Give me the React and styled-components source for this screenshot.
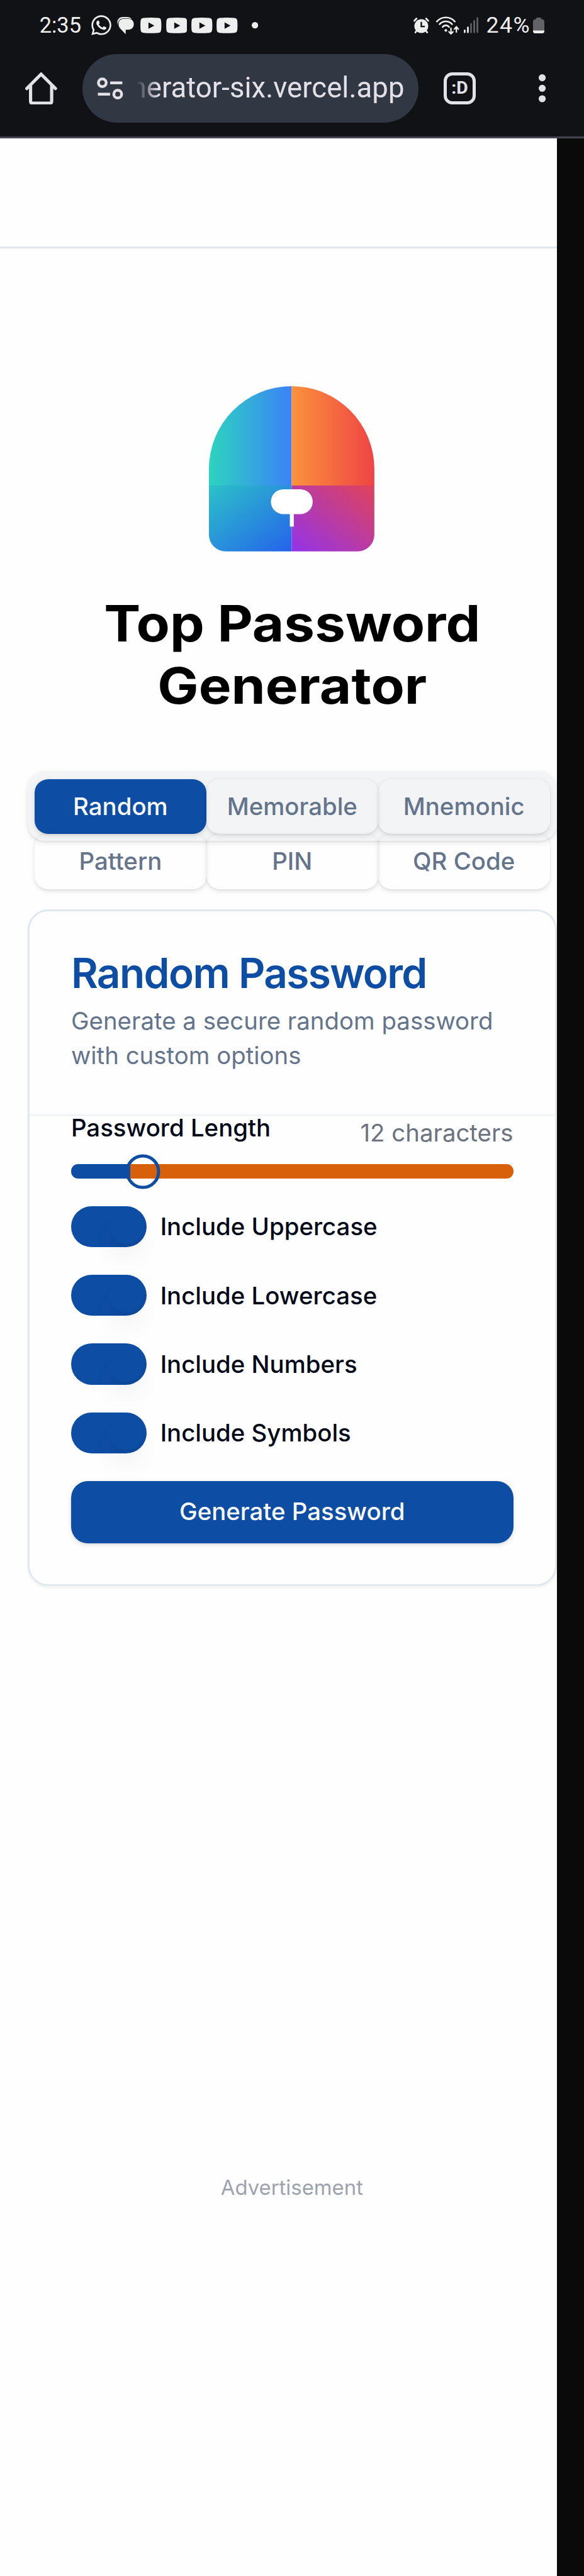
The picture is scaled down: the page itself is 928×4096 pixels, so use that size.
import React from "react";
import styled, { createGlobalStyle } from "styled-components";
import { FaWhatsapp } from "react-icons/fa";

/* 1rem is ten design pixels. */
const GlobalStyle = createGlobalStyle`
  html { font-size: 8.59px; }
  *, *::before, *::after { box-sizing: border-box; }
  body { margin: 0; background: #0a0a0a; }
  #root { height: 4096px; overflow: hidden; }
  h1, h2, p { margin: 0; }
  button { font: inherit; border: 0; padding: 0; background: none; }
`;

const Screen = styled.div`
  display: flex;
  flex-direction: column;
  width: 100%;
  height: 100%;
  font-family: Inter, "Liberation Sans", sans-serif;
  font-size: 4.47rem;
`;

const BrowserChrome = styled.header`
  flex: none;
  height: 25.6rem;
  background: #111216;
  border-bottom: 3px solid #45454f;
  color: #e3e1e8;
`;

const StatusBar = styled.div`
  display: flex;
  justify-content: space-between;
  align-items: center;
  height: 10rem;
  padding: 0 7.3rem 0.6rem 7.3rem;
  color: #eee;
  font-family: Roboto, sans-serif;
  font-size: 4rem;
`;

const StatusGroup = styled.div`
  display: flex;
  align-items: center;
`;

const Clock = styled.span`
  width: 8.1rem;
  white-space: nowrap;
`;

const BatteryLevel = styled.span`
  margin-left: 1.4rem;
  font-size: 4.15rem;
  letter-spacing: 0.04em;
  white-space: nowrap;
`;

const Glyph = styled.svg`
  display: block;
  flex: none;
  width: ${(p) => p.$w}rem;
  height: ${(p) => p.$h}rem;
  margin-left: ${(p) => p.$gap || 0}rem;
`;

const WhatsAppIcon = styled(FaWhatsapp)`
  width: 4.2rem;
  height: 4.2rem;
  margin-left: 1.2rem;
`;

const Toolbar = styled.div`
  display: flex;
  align-items: center;
  height: 12.7rem;
  padding-left: 4.7rem;
`;

const AddressPill = styled.div`
  display: flex;
  align-items: center;
  justify-content: space-between;
  width: 62.1rem;
  height: 12.7rem;
  margin-left: 4.7rem;
  padding: 0 2.6rem;
  border-radius: 6.4rem;
  background: #323744;
`;

const AddressText = styled.div`
  display: flex;
  justify-content: flex-end;
  width: 49.5rem;
  overflow: hidden;
  font-family: Roboto, sans-serif;
  font-size: 5.3rem;
  line-height: 8rem;
  letter-spacing: 0.001em;
  white-space: nowrap;
  mask-image: linear-gradient(to right, transparent 0, #000 4rem);
`;

const TabCounter = styled.div`
  display: flex;
  align-items: center;
  justify-content: center;
  width: 5.9rem;
  height: 5.9rem;
  margin-left: 4.7rem;
  border: 5.5px solid #e3e1e8;
  border-radius: 1.6rem;
  font-family: Roboto, sans-serif;
  font-weight: 700;
  font-size: 3.3rem;
  line-height: 1;
`;

const Viewport = styled.div`
  display: flex;
  flex: 1;
  min-height: 0;
`;

const Page = styled.main`
  width: 103rem;
  overflow: hidden;
  background: #fefefe;
`;

const SiteHeader = styled.div`
  height: 20.4rem;
  border-bottom: 3px solid #e2e7ee;
`;

const Content = styled.div`
  display: flex;
  flex-direction: column;
  align-items: center;
  padding: 25.5rem 0 0 5rem;
`;

const Logo = styled.svg`
  display: block;
  width: 30.6rem;
  height: 30.6rem;
`;

const Title = styled.h1`
  margin-top: 7.6rem;
  color: #000;
  font-size: 9.3rem;
  font-weight: 700;
  line-height: 11.45rem;
  text-align: center;
  white-space: pre-line;
  transform: scaleX(1.09);
`;

const TabList = styled.div`
  display: grid;
  grid-template-columns: repeat(3, 1fr);
  grid-auto-rows: 10.2rem;
  align-self: stretch;
  height: 12.8rem;
  margin: 10.3rem 0 0 0.1rem;
  padding: 1.3rem;
  border-radius: 3.2rem;
  background: #f2f4f6;
  box-shadow: 0 0.32rem 0.96rem rgba(0, 0, 0, 0.1), 0 0.32rem 0.64rem -0.32rem rgba(0, 0, 0, 0.1);
`;

const Tab = styled.button`
  display: flex;
  align-items: center;
  justify-content: center;
  padding-bottom: 0.2rem;
  border-radius: 2.5rem;
  background: ${(p) => (p.$active ? "#0e4da4" : "transparent")};
  color: ${(p) => (p.$active ? "#f8fafc" : "#64748b")};
  font-weight: 500;
  box-shadow: 0 0.32rem 0.96rem rgba(0, 0, 0, 0.1), 0 0.32rem 0.64rem -0.32rem rgba(0, 0, 0, 0.1);
`;

const Card = styled.section`
  align-self: stretch;
  height: 125.2rem;
  margin: 12.7rem 0 0 0.1rem;
  border: 3px solid #e2e8ee;
  border-radius: 3.8rem;
  background: #fefefe;
  box-shadow: 0 0.32rem 0.64rem rgba(0, 0, 0, 0.05);
`;

const CardHeader = styled.div`
  height: 37.9rem;
  padding: 7.6rem 7.7rem 0;
  border-bottom: 3px solid #f1f3f5;
`;

const CardTitle = styled.h2`
  color: #0e4da4;
  font-size: 7.66rem;
  font-weight: 600;
  line-height: 7.66rem;
  letter-spacing: -0.025em;
`;

const CardText = styled.p`
  margin-top: 1.8rem;
  color: #64748b;
  line-height: 6.38rem;
`;

const CardBody = styled.div`
  padding: 0 7.7rem;
`;

const LengthRow = styled.div`
  display: flex;
  justify-content: space-between;
  height: 8.9rem;
  line-height: 6.38rem;
`;

const Label = styled.span`
  color: #020817;
  font-weight: 500;
`;

const LengthLabel = styled(Label)`
  margin-top: -1rem;
`;

const LengthValue = styled.span`
  margin-top: -0.1rem;
  color: #6b7280;
`;

const SliderTrack = styled.div`
  position: relative;
  height: 2.6rem;
  border-radius: 1.3rem;
  background: linear-gradient(to right, #0e4da4 10.9rem, #d9600a 10.9rem);
`;

const SliderThumb = styled.span`
  position: absolute;
  top: 50%;
  left: 13.25rem;
  width: 6.4rem;
  height: 6.4rem;
  border: 5.4px solid #0e4da4;
  border-radius: 50%;
  transform: translate(-50%, -50%);
`;

const OptionList = styled.div`
  display: flex;
  flex-direction: column;
  gap: 5.1rem;
  margin-top: 5.1rem;
`;

const Option = styled.div`
  display: flex;
  align-items: center;
  gap: 2.5rem;
  height: 7.63rem;
`;

const Switch = styled.span`
  display: flex;
  justify-content: flex-end;
  width: 14rem;
  height: 7.63rem;
  padding: 0.63rem;
  border-radius: 3.9rem;
  background: #0e4da4;

  &::after {
    content: "";
    width: 6.4rem;
    height: 6.4rem;
    border-radius: 50%;
    background: #0e4da4;
    box-shadow: 0 3.2rem 4.8rem -0.96rem rgba(0, 0, 0, 0.08), 0 1.28rem 1.92rem -1.28rem rgba(0, 0, 0, 0.08);
  }
`;

const GenerateButton = styled.button`
  position: relative;
  display: block;
  width: 100%;
  height: 11.5rem;
  margin-top: 5.1rem;
  padding-bottom: 0.3rem;
  border-radius: 3.1rem;
  background: #0e4da4;
  color: #f8fafc;
  font-weight: 500;
  box-shadow: 0 0.32rem 0.96rem rgba(0, 0, 0, 0.1), 0 0.32rem 0.64rem -0.32rem rgba(0, 0, 0, 0.1);
`;

const AdNote = styled.p`
  margin-top: 108.8rem;
  color: #9ca3af;
  font-size: 3.83rem;
  line-height: 5.1rem;
`;

const tabs = ["Random", "Memorable", "Mnemonic", "Pattern", "PIN", "QR Code"];
const options = ["Uppercase", "Lowercase", "Numbers", "Symbols"];

const MessagesIcon = () => (
  <Glyph $w={3.1} $h={3.2} $gap={0.9} viewBox="0 0 31 32">
    <path d="M1 14C-1 5 4 0 11 0h7c4 0 7 1 9 4C24 2.600 21 2.500 18 2.500h-6C6 2.500 2 6 1 14Z" fill="#eee" />
    <path d="M12 3.500h9c6 0 10 4 10 10s-4 10-10 10h-5V32L5.500 21C1 16 1.500 3.500 12 3.500Z" fill="#eee" />
  </Glyph>
);

const VideoIcon = ({ gap }) => (
  <Glyph $w={3.9} $h={2.9} $gap={gap} viewBox="0 0 39 29">
    <path d="M6 .7Q19.500-.6 33 .7 38.500 1 38.500 6.500q.8 8 0 16 0 5.500-5.500 5.800-13.500 1.300-27 0-5.500-.3-5.500-5.800-.8-8 0-16Q.5 1 6 .7Z" fill="#eee" />
    <path d="M15 8.800v12l11-6Z" fill="#111216" />
  </Glyph>
);

const AlarmIcon = () => (
  <Glyph $w={2.9} $h={2.9} viewBox="0 0 29 29">
    <g stroke="#eee" strokeWidth="3.200" strokeLinecap="round" fill="none">
      <path d="M1.700 6 5.500 1.800M27.300 6l-3.800-4.200M6 24l-2.300 3.500M23 24l2.300 3.500" />
    </g>
    <circle cx="14.500" cy="15.800" r="12.800" fill="#eee" />
    <path d="M14.500 8v8.500h6.500" fill="none" stroke="#111216" strokeWidth="2.800" />
  </Glyph>
);

const WifiIcon = () => (
  <Glyph $w={4.3} $h={3.4} $gap={1.3} viewBox="0 0 43 34">
    <g fill="none" stroke="#eee" strokeWidth="3" strokeLinecap="round">
      <path d="M1.500 9.500C10-.5 26-.5 34.500 9.500M6.500 14.500c6-7 17-7 23 0M12 19.700c3-4 9-4 12 0" />
      <path strokeWidth="2.600" d="M27.500 22v9.500M23.800 28.500l3.700 4 3.700-4M37.500 29v-9M33.800 23.500l3.700-4 3.700 4" />
    </g>
    <circle cx="18" cy="26" r="2.500" fill="#eee" />
  </Glyph>
);

const SignalIcon = () => (
  <Glyph $w={2.7} $h={3} $gap={0.9} viewBox="0 0 27 30">
    <g strokeWidth="3.200" strokeLinecap="round">
      <path d="M1.700 25v3.200M7.600 19.500v8.700" stroke="#eee" />
      <path d="M13.400 13v15.200M19.300 7v21.200M25.200 2v26.200" stroke="#5f6063" />
    </g>
  </Glyph>
);

const BatteryIcon = () => (
  <Glyph $w={2.1} $h={2.9} $gap={0.5} viewBox="0 0 21 29">
    <path d="M6 0h9v3h2q4 1 4 5v17q0 4-4 4H4q-4 0-4-4V8q0-4 4-5h2Z" fill="#626366" />
    <path d="M0 24h21v1q0 4-4 4H4q-4 0-4-4Z" fill="#eee" />
  </Glyph>
);

const HomeIcon = () => (
  <Glyph $w={5.9} $h={6} viewBox="0 0 59 60">
    <path d="M3 30 29.500 3.500 56 30" fill="none" stroke="#e3e1e8" strokeWidth="6" strokeLinecap="round" />
    <path d="M10 24v30q0 3 3 3h33q3 0 3-3V24" fill="none" stroke="#e3e1e8" strokeWidth="6" />
  </Glyph>
);

const SiteInfoIcon = () => (
  <Glyph $w={4.9} $h={4.1} viewBox="0 0 49 41">
    <g fill="none" stroke="#e3e1e8" strokeWidth="5.200">
      <circle cx="10" cy="10" r="7.200" />
      <circle cx="38.500" cy="31" r="7.200" />
      <path d="M24.500 10.300h22.500M1.800 31.200h22.500" />
    </g>
  </Glyph>
);

const MenuIcon = () => (
  <Glyph $w={1.3} $h={5.2} $gap={11.7} viewBox="0 0 13 52">
    <g fill="#e3e1e8">
      <circle cx="6.500" cy="6.600" r="6.500" />
      <circle cx="6.500" cy="26" r="6.500" />
      <circle cx="6.500" cy="45.400" r="6.500" />
    </g>
  </Glyph>
);

const VaultLogo = () => (
  <Logo viewBox="0 0 306 306">
    <defs>
      <linearGradient id="teal">
        <stop stopColor="#2dd4bf" />
        <stop offset="1" stopColor="#3b82f6" />
      </linearGradient>
      <linearGradient id="orange">
        <stop stopColor="#fb923c" />
        <stop offset="1" stopColor="#ef4444" />
      </linearGradient>
      <linearGradient id="blue" x1="0" y1="0" x2="1" y2="1">
        <stop stopColor="#2cc1c8" />
        <stop offset="1" stopColor="#2563eb" />
      </linearGradient>
      <linearGradient id="purple" x1="0" y1="1" x2="1" y2="0">
        <stop stopColor="#9333ea" />
        <stop offset="1" stopColor="#e0435a" />
      </linearGradient>
    </defs>
    <path d="M153 0A153 153 0 0 0 0 153v31h153Z" fill="url(#teal)" />
    <path d="M153 0a153 153 0 0 1 153 153v31H153Z" fill="url(#orange)" />
    <path d="M0 184h153v122H31A31 31 0 0 1 0 275Z" fill="url(#blue)" />
    <path d="M153 184h153v91a31 31 0 0 1-31 31H153Z" fill="url(#purple)" />
    <rect x="114.700" y="191" width="77.300" height="46" rx="23" fill="#fff" />
    <rect x="149.700" y="236" width="7.300" height="24" fill="#fff" />
  </Logo>
);

export default function App() {
  return (
    <Screen>
      <GlobalStyle />
      <BrowserChrome>
        <StatusBar>
          <StatusGroup>
            <Clock>2:35</Clock>
            <WhatsAppIcon />
            <MessagesIcon />
            <VideoIcon gap={1.2} />
            <VideoIcon gap={0.8} />
            <VideoIcon gap={0.8} />
            <VideoIcon gap={0.8} />
            <Glyph $w={1.2} $h={1.2} $gap={2.6} viewBox="0 0 12 12">
              <circle cx="6" cy="6" r="6" fill="#eee" />
            </Glyph>
          </StatusGroup>
          <StatusGroup>
            <AlarmIcon />
            <WifiIcon />
            <SignalIcon />
            <BatteryLevel>24%</BatteryLevel>
            <BatteryIcon />
          </StatusGroup>
        </StatusBar>
        <Toolbar>
          <HomeIcon />
          <AddressPill>
            <SiteInfoIcon />
            <AddressText>generator-six.vercel.app</AddressText>
          </AddressPill>
          <TabCounter>:D</TabCounter>
          <MenuIcon />
        </Toolbar>
      </BrowserChrome>
      <Viewport>
        <Page>
          <SiteHeader />
          <Content>
            <VaultLogo />
            <Title>{"Top Password\nGenerator"}</Title>
            <TabList>
              {tabs.map((name, i) => (
                <Tab key={name} $active={i === 0}>{name}</Tab>
              ))}
            </TabList>
            <Card>
              <CardHeader>
                <CardTitle>Random Password</CardTitle>
                <CardText>Generate a secure random password with custom options</CardText>
              </CardHeader>
              <CardBody>
                <LengthRow>
                  <LengthLabel>Password Length</LengthLabel>
                  <LengthValue>12 characters</LengthValue>
                </LengthRow>
                <SliderTrack>
                  <SliderThumb />
                </SliderTrack>
                <OptionList>
                  {options.map((name) => (
                    <Option key={name}>
                      <Switch />
                      <Label>Include {name}</Label>
                    </Option>
                  ))}
                </OptionList>
                <GenerateButton>Generate Password</GenerateButton>
              </CardBody>
            </Card>
            <AdNote>Advertisement</AdNote>
          </Content>
        </Page>
      </Viewport>
    </Screen>
  );
}
